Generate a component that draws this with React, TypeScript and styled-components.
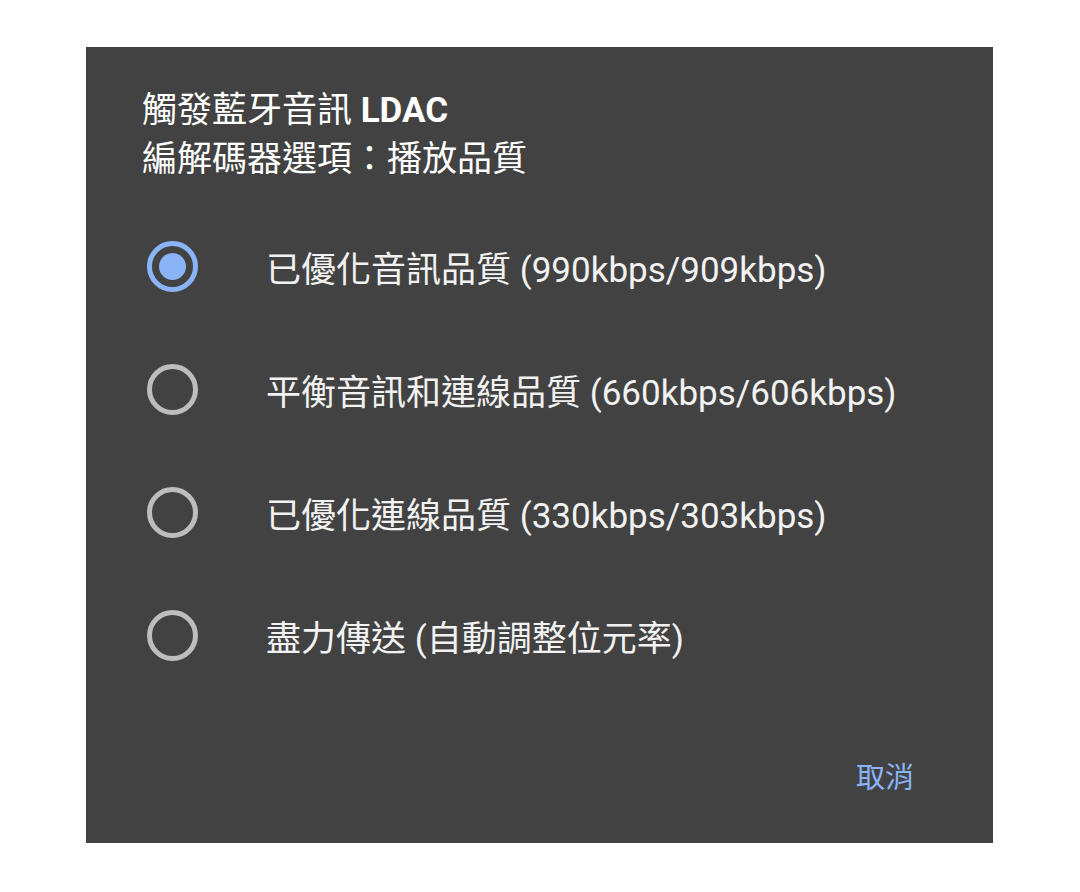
import React from 'react';
import styled, { createGlobalStyle } from 'styled-components';

const GlobalStyle = createGlobalStyle`
    html, body {
        margin: 0;
        padding: 0;
        background: #fff;
    }
    body {
        font-family: Roboto, "Noto Sans CJK TC", sans-serif;
    }
`;

const Page = styled('div')`
    padding: 47px 0 0 86px;
    width: 1080px;
    height: 892px;
    box-sizing: border-box;
`;

const Dialog = styled('div')`
    background-color: #424242;
    width: 907px;
    height: 796px;
    display: flex;
    flex-direction: column;
    box-sizing: border-box;
    padding-top: 39px;
`;

const Title = styled('h2')`
    margin: 0 0 21px;
    padding: 0 56px;
    font-size: 35px;
    line-height: 49px;
    font-weight: 400;
    color: #fff;

    b {
        font-weight: 700;
    }
`;

const Options = styled('div')`
    display: flex;
    flex-direction: column;
`;

const Row = styled('label')`
    display: flex;
    align-items: center;
    height: 123px;
    padding-left: 61px;
    gap: 68px;
    cursor: pointer;
`;

const Radio = styled('span')<{ $checked?: boolean }>`
    width: 51px;
    height: 51px;
    box-sizing: border-box;
    border-radius: 50%;
    border: 5px solid ${p => (p.$checked ? '#8ab4f8' : '#bdbdbd')};
    display: flex;
    align-items: center;
    justify-content: center;
    flex-shrink: 0;

    &::after {
        content: '';
        width: 27px;
        height: 27px;
        border-radius: 50%;
        background: #8ab4f8;
        display: ${p => (p.$checked ? 'block' : 'none')};
    }
`;

const Label = styled('span')`
    font-size: 35px;
    color: #f2f2f2;
    white-space: nowrap;
`;

const Actions = styled('div')`
    flex: 1;
    display: flex;
    justify-content: flex-end;
    align-items: center;
    padding: 0 79px 0 0;
    margin-top: 10px;
`;

const TextButton = styled('button')`
    background: none;
    border: none;
    padding: 0;
    font-family: inherit;
    font-size: 29px;
    font-weight: 400;
    color: #8ab4f8;
    cursor: pointer;
`;

const options = [
    '已優化音訊品質 (990kbps/909kbps)',
    '平衡音訊和連線品質 (660kbps/606kbps)',
    '已優化連線品質 (330kbps/303kbps)',
    '盡力傳送 (自動調整位元率)',
];

export default function App() {
    const [selected, setSelected] = React.useState(0);
    return (
        <Page>
            <GlobalStyle />
            <Dialog>
                <Title>
                    觸發藍牙音訊 <b>LDAC</b>
                    <br />
                    編解碼器選項：播放品質
                </Title>
                <Options>
                    {options.map((text, i) => (
                        <Row key={text} onClick={() => setSelected(i)}>
                            <Radio $checked={selected === i} />
                            <Label>{text}</Label>
                        </Row>
                    ))}
                </Options>
                <Actions>
                    <TextButton>取消</TextButton>
                </Actions>
            </Dialog>
        </Page>
    );
}
